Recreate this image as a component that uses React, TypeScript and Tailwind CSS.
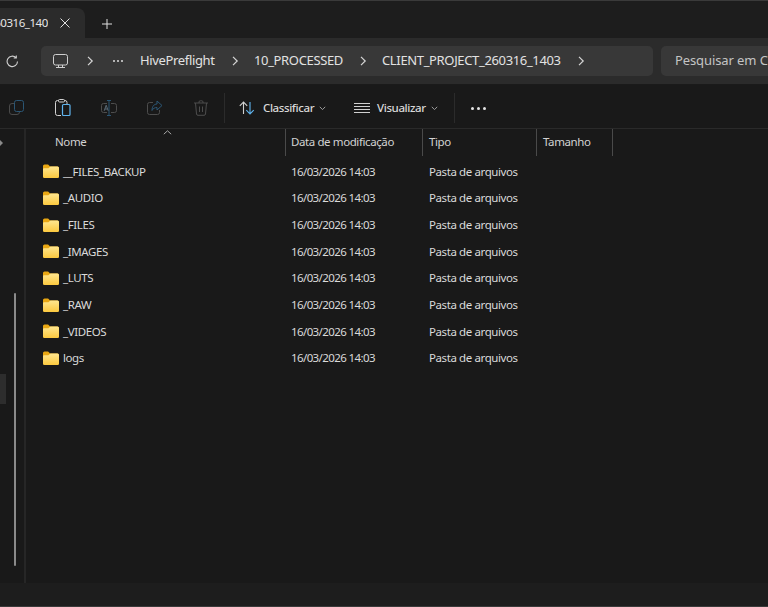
import React from 'react';

const font = { fontFamily: '"Noto Sans", sans-serif' };

const folders = ['__FILES_BACKUP', '_AUDIO', '_FILES', '_IMAGES', '_LUTS', '_RAW', '_VIDEOS', 'logs'];

const FolderIcon = ({ id }: { id: string }) => (
  <svg width="16" height="14" viewBox="0 0 16 14" className="shrink-0">
    <defs>
      <linearGradient id={id} x1="0" y1="0" x2="0" y2="1">
        <stop offset="0" stopColor="#ffe68f" />
        <stop offset="1" stopColor="#fcc93f" />
      </linearGradient>
    </defs>
    <path d="M0 2 a1.5 1.5 0 0 1 1.5-1.5 h3.6 l2 2 h7.4 a1.5 1.5 0 0 1 1.5 1.5 v8 a1.5 1.5 0 0 1-1.5 1.5 h-13 a1.5 1.5 0 0 1-1.5-1.5z" fill="#e9a713" />
    <path d="M0 5.2 a1 1 0 0 1 1-1 h4.4 l2-1.6 h7.1 a1.5 1.5 0 0 1 1.5 1.5 v8.4 a1.5 1.5 0 0 1-1.5 1.5 h-13 a1.5 1.5 0 0 1-1.5-1.5z" fill={`url(#${id})`} />
  </svg>
);

const Chevron = ({ className }: { className: string }) => (
  <svg width="8" height="10" viewBox="0 0 8 10" className={className} fill="none" stroke="#d6d6d6" strokeWidth="1.2">
    <path d="M2 0.8 L6.2 5 L2 9.2" />
  </svg>
);

const Caret = ({ className }: { className: string }) => (
  <svg width="7" height="5" viewBox="0 0 7 5" className={className} fill="none" stroke="#9a9a9a" strokeWidth="1">
    <path d="M0.8 0.8 L3.5 3.6 L6.2 0.8" />
  </svg>
);

const CopyIcon = () => (
  <svg width="16" height="16" viewBox="0 0 16 16" fill="none" strokeWidth="1">
    <rect x="0.5" y="3.5" width="10" height="11" rx="2.5" stroke="#4a4a4a" />
    <rect x="5.5" y="0.5" width="9" height="11" rx="2" fill="#191919" stroke="#2b5674" />
  </svg>
);

const PasteIcon = () => (
  <svg width="16" height="18" viewBox="0 0 16 18" fill="none" strokeWidth="1">
    <path d="M6 16.5 H2.5 a2 2 0 0 1-2-2 V3.5 a2 2 0 0 1 2-2 H10 a2 2 0 0 1 2 2 V5" stroke="#d2d2d2" />
    <rect x="3.5" y="0.5" width="6" height="2.5" rx="1" fill="#191919" stroke="#d2d2d2" />
    <rect x="7.5" y="5.5" width="7.5" height="11" rx="1" fill="#191919" stroke="#5fb4ee" strokeWidth="1.2" />
  </svg>
);

const RenameIcon = () => (
  <svg width="16" height="16" viewBox="0 0 16 16" fill="none" strokeWidth="1">
    <path d="M6 3.5 H2.5 a2 2 0 0 0-2 2 v5 a2 2 0 0 0 2 2 H6 M10 3.5 h3.5 a2 2 0 0 1 2 2 v5 a2 2 0 0 1-2 2 H10" stroke="#4d4d4d" />
    <path d="M8 0.5 V15.5 M6 0.5 h4 M6 15.5 h4" stroke="#2b5674" />
    <path d="M3.2 10.8 L5.2 5.2 L7.2 10.8 M3.9 9 h2.6" stroke="#5a6a76" />
  </svg>
);

const ShareIcon = () => (
  <svg width="16" height="16" viewBox="0 0 16 16" fill="none" strokeWidth="1">
    <path d="M6 2.5 H2.5 a2 2 0 0 0-2 2 v8 a2 2 0 0 0 2 2 h8 a2 2 0 0 0 2-2 V10" stroke="#4d4d4d" />
    <path d="M10 1 L15 5.5 L10 10 V7.5 C7.5 7.5 6 8.5 5 10.5 C5 6.5 7 4 10 4 Z" fill="#191919" stroke="#2b5674" />
  </svg>
);

const TrashIcon = () => (
  <svg width="14" height="16" viewBox="0 0 14 16" fill="none" stroke="#4d4d4d" strokeWidth="1">
    <path d="M0 3 H14 M5 3 V2 a1.2 1.2 0 0 1 1.2-1.2 h1.6 A1.2 1.2 0 0 1 9 2 V3 M1.5 3 L2.5 14 a1.5 1.5 0 0 0 1.5 1.3 h6 a1.5 1.5 0 0 0 1.5-1.3 L12.5 3 M5.5 6.5 v5.5 M8.5 6.5 v5.5" />
  </svg>
);

const SortIcon = () => (
  <svg width="16" height="14" viewBox="0 0 16 14" fill="none" strokeWidth="1.1">
    <path d="M4.5 13 V1 M0.8 4.8 L4.5 1 L8.2 4.8" stroke="#d0d0d0" />
    <path d="M11 1 V13 M7.3 9.2 L11 13 L14.7 9.2" stroke="#5fb4ee" />
  </svg>
);

const ViewIcon = () => (
  <svg width="16" height="11" viewBox="0 0 16 11" stroke="#d0d0d0" strokeWidth="1">
    <path d="M0 .5 H16 M0 3.5 H16 M0 6.5 H16 M0 9.5 H16" />
  </svg>
);

const MonitorIcon = () => (
  <svg width="15" height="15" viewBox="0 0 15 15" fill="none" stroke="#cfcfcf" strokeWidth="1">
    <rect x="0.5" y="0.5" width="14" height="10.5" rx="2" />
    <path d="M3 13.5 H12 M5.5 11 V13.5 M9.5 11 V13.5" />
  </svg>
);

const Dots = ({ color, size, gap }: { color: string; size: string; gap: string }) => (
  <div className={`flex ${gap}`}>
    {[0, 1, 2].map((i) => (
      <span key={i} className={`${size} ${color} rounded-full`} />
    ))}
  </div>
);

const ToolBtn = ({ children }: { children: React.ReactNode }) => (
  <div className="w-[46px] flex justify-center items-center">{children}</div>
);

export default function App() {
  return (
    <div style={font} className="w-[768px] h-[607px] overflow-hidden flex flex-col bg-[#1d1d1d] text-[#e4e4e4]">
      <div className="h-px bg-[#3a3a3a] shrink-0" />

      {/* Abas */}
      <div className="h-[37px] shrink-0 pt-[7px] flex items-start">
        <div className="w-[85px] h-[30px] bg-[#2b2b2b] rounded-tr-lg flex items-center overflow-hidden">
          <div className="w-[48px] overflow-hidden shrink-0">
            <span className="block text-[11.5px] tracking-[-0.45px] whitespace-nowrap -ml-[12px] text-[#e6e6e6]">260316_1403</span>
          </div>
          <svg width="10" height="10" viewBox="0 0 10 10" className="ml-[12px]" stroke="#e0e0e0" strokeWidth="1">
            <path d="M.5 .5 L9.5 9.5 M9.5 .5 L.5 9.5" />
          </svg>
        </div>
        <svg width="10" height="10" viewBox="0 0 10 10" className="ml-[17px] mt-[11px]" stroke="#e0e0e0" strokeWidth="1">
          <path d="M5 0 V10 M0 5 H10" />
        </svg>
      </div>

      {/* Endereço */}
      <div className="h-[47px] shrink-0 bg-[#2b2b2b] flex items-start pt-[8px] border-b border-[#1a1a1a]">
        <svg width="13" height="13" viewBox="0 0 13 13" className="ml-[6px] mt-[9px]" fill="none" stroke="#d0d0d0" strokeWidth="1.1">
          <path d="M11.5 6.5 A5.2 5.2 0 1 1 10 2.7 M10.3 .4 V3 H7.7" />
        </svg>
        <div className="ml-[22px] w-[612px] h-[30px] bg-[#383838] rounded-[5px] flex items-center text-[13px] tracking-[-0.35px] text-[#e2e2e2]">
          <div className="ml-[12px]"><MonitorIcon /></div>
          <Chevron className="ml-[18px]" />
          <div className="ml-[19px]"><Dots color="bg-[#dcdcdc]" size="w-[2px] h-[2px]" gap="gap-[2px]" /></div>
          <span className="ml-[17px] w-[76px] whitespace-nowrap">HivePreflight</span>
          <Chevron className="ml-[15px]" />
          <span className="ml-[15px] w-[90px] whitespace-nowrap">10_PROCESSED</span>
          <Chevron className="ml-[15px]" />
          <span className="ml-[15px] w-[180px] whitespace-nowrap">CLIENT_PROJECT_260316_1403</span>
          <Chevron className="ml-[15px]" />
        </div>
        <div className="ml-[8px] flex-1 h-[30px] bg-[#383838] rounded-l-[5px] flex items-center pl-[14px] overflow-hidden">
          <span className="text-[13px] tracking-[-0.1px] whitespace-nowrap text-[#c4c4c4]">Pesquisar em CLIENT_PROJECT_260316_1403</span>
        </div>
      </div>

      {/* Barra de comandos */}
      <div className="h-[44px] shrink-0 bg-[#191919] flex items-center pt-[3px] border-b border-[#2a2a2a] text-[11.5px] tracking-[-0.4px] font-medium text-[#d8d8d8]">
        <div className="flex -ml-[6px]">
          <ToolBtn><CopyIcon /></ToolBtn>
          <ToolBtn><PasteIcon /></ToolBtn>
          <ToolBtn><RenameIcon /></ToolBtn>
          <ToolBtn><ShareIcon /></ToolBtn>
          <ToolBtn><TrashIcon /></ToolBtn>
        </div>
        <div className="w-px h-[30px] bg-[#2b2b2b]" />
        <div className="ml-[14px]"><SortIcon /></div>
        <span className="ml-[8px] w-[52px] whitespace-nowrap">Classificar</span>
        <Caret className="ml-[4px]" />
        <div className="ml-[28px]"><ViewIcon /></div>
        <span className="ml-[7px] w-[50px] whitespace-nowrap">Visualizar</span>
        <Caret className="ml-[4px]" />
        <div className="w-px h-[30px] bg-[#2b2b2b] ml-[16px]" />
        <div className="ml-[16px]"><Dots color="bg-[#e4e4e4]" size="w-[3px] h-[3px]" gap="gap-[3px]" /></div>
      </div>

      {/* Conteúdo */}
      <div className="flex-1 flex min-h-0 bg-[#191919]">
        <div className="w-[24px] shrink-0 flex relative">
          <div className="w-[6px] flex flex-col">
            <div className="h-[245px]" />
            <div className="h-[30px] bg-[#2d2d2d]" />
          </div>
          <div className="ml-[8px] mt-[164px] w-[2px] h-[273px] bg-[#8a8a8a] rounded-full" />
          <svg width="3" height="6" viewBox="0 0 3 6" className="absolute left-0 top-[11px]" fill="#8a8a8a">
            <path d="M0 0 L3 3 L0 6Z" />
          </svg>
        </div>
        <div className="w-[2px] shrink-0 bg-[#262626]" />
        <div className="flex-1 min-w-0 relative text-[11.5px] tracking-[-0.4px] text-[#dadada]">
          <svg width="9" height="5" viewBox="0 0 9 5" className="absolute left-[137px] top-px" fill="none" stroke="#a8a8a8" strokeWidth="1">
            <path d="M.8 4.2 L4.5 .8 L8.2 4.2" />
          </svg>
          <div className="h-[29px] flex text-[#d2d2d2]">
            <div className="w-[260px] h-[27px] pl-[29px] pt-[4px] border-r border-[#4a4a4a]">Nome</div>
            <div className="w-[137px] h-[27px] pl-[5px] pt-[4px] border-r border-[#4a4a4a] whitespace-nowrap">Data de modificação</div>
            <div className="w-[114px] h-[27px] pl-[6px] pt-[4px] border-r border-[#4a4a4a]">Tipo</div>
            <div className="w-[76px] h-[27px] pl-[6px] pt-[4px] border-r border-[#4a4a4a]">Tamanho</div>
          </div>
          <div className="flex flex-col">
            {folders.map((name, i) => (
              <div key={name} className="h-[26.67px] flex items-center">
                <div className="w-[260px] pl-[17px] flex items-center">
                  <FolderIcon id={`folder-${i}`} />
                  <span className="ml-[4px]">{name}</span>
                </div>
                <div className="w-[137px] pl-[5px] whitespace-nowrap tracking-[-0.6px]">16/03/2026 14:03</div>
                <div className="pl-[6px] whitespace-nowrap">Pasta de arquivos</div>
              </div>
            ))}
          </div>
        </div>
      </div>

      {/* Rodapé */}
      <div className="h-[24px] shrink-0 bg-[#1d1d1d] border-b border-[#3a3a3a]" />
    </div>
  );
}
